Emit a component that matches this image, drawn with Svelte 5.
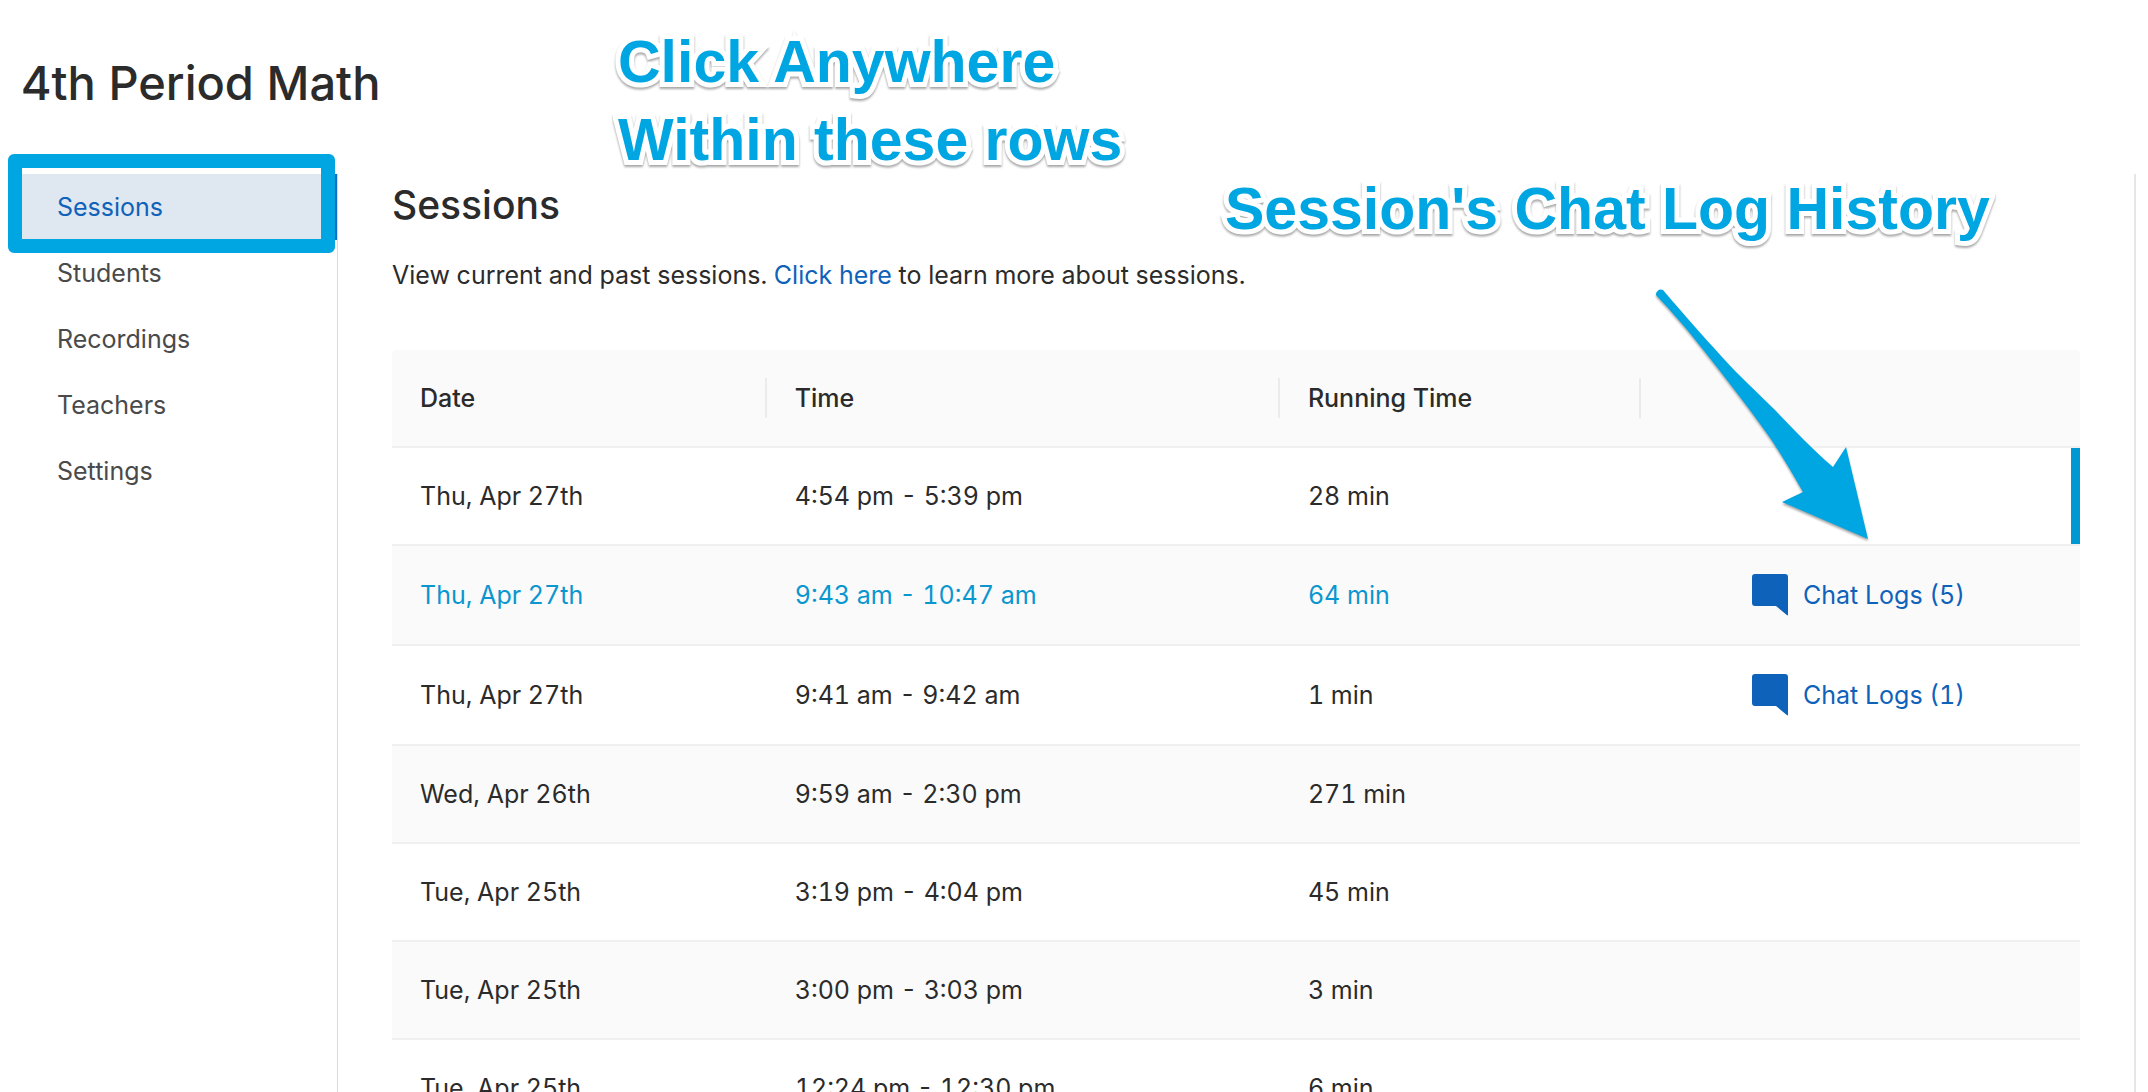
<script>
	let title = '4th Period Math';

	let tabs = ['Sessions', 'Students', 'Recordings', 'Teachers', 'Settings'];
	let active = $state('Sessions');

	let sessions = [
		{ id: 1, date: 'Thu, Apr 27th', time: '4:54 pm - 5:39 pm', running: '28 min', chats: 0, live: true },
		{ id: 2, date: 'Thu, Apr 27th', time: '9:43 am - 10:47 am', running: '64 min', chats: 5 },
		{ id: 3, date: 'Thu, Apr 27th', time: '9:41 am - 9:42 am', running: '1 min', chats: 1 },
		{ id: 4, date: 'Wed, Apr 26th', time: '9:59 am - 2:30 pm', running: '271 min', chats: 0 },
		{ id: 5, date: 'Tue, Apr 25th', time: '3:19 pm - 4:04 pm', running: '45 min', chats: 0 },
		{ id: 6, date: 'Tue, Apr 25th', time: '3:00 pm - 3:03 pm', running: '3 min', chats: 0 },
		{ id: 7, date: 'Tue, Apr 25th', time: '12:24 pm - 12:30 pm', running: '6 min', chats: 0 }
	];

	let selected = $state(2);
</script>

<div class="page">
	<h1>{title}</h1>

	<div class="columns">
		<nav>
			{#each tabs as tab}
				<button class="tab" class:active={tab === active} onclick={() => (active = tab)}>{tab}</button>
			{/each}
			<div class="highlight"></div>
		</nav>

		<main>
			<h2>Sessions</h2>
			<p>View current and past sessions. <a href="#learn">Click here</a> to learn more about sessions.</p>

			<table>
				<colgroup>
					<col class="date" />
					<col class="time" />
					<col class="running" />
					<col />
				</colgroup>
				<thead>
					<tr>
						<th>Date</th>
						<th>Time</th>
						<th>Running Time</th>
						<th></th>
					</tr>
				</thead>
				<tbody>
					{#each sessions as s (s.id)}
						<tr
							class:selected={s.id === selected}
							class:live={s.live}
							class:tall={s.chats > 0}
							onclick={() => (selected = s.id)}
						>
							<td>{s.date}</td>
							<td>{s.time}</td>
							<td>{s.running}</td>
							<td>
								{#if s.chats}
									<a class="chat" href="#chat-{s.id}">
										<svg width="36" height="42" viewBox="0 0 36 42" aria-hidden="true">
											<path d="M3 0H33Q36 0 36 3V40.500Q36 42 34.800 41L24 32H3Q0 32 0 29V3Q0 0 3 0Z" />
										</svg>
										<span>Chat Logs ({s.chats})</span>
									</a>
								{/if}
							</td>
						</tr>
					{/each}
				</tbody>
			</table>
		</main>
	</div>

	<div class="note rows">Click Anywhere<br />Within these rows</div>
	<div class="note history">Session's Chat Log History</div>
	<svg class="arrow" width="230" height="270" viewBox="0 0 230 270" aria-hidden="true">
		<path
			d="M23 10C45 36 62 55 82 77C100 97 117 112 135 130C154 150 172 169 193 187L206 167L228 259L142 222L163 212C152 193 140 172 128 155C106 124 84 96 65 72C47 49 32 32 16 15A5 5 0 0 1 23 10Z"
		/>
	</svg>
</div>

<style>
	:global(body) {
		margin: 0;
		background: #fff;
	}

	.page {
		position: relative;
		height: 100vh;
		overflow: hidden;
		display: flex;
		flex-direction: column;
		box-sizing: border-box;
		padding: 53px 12px 0;
		font-family: Inter, 'Liberation Sans', sans-serif;
		font-size: 25px;
		line-height: 36px;
		font-variant-numeric: tabular-nums;
		color: #2b2b2b;
	}

	h1 {
		margin: 0 9px;
		font-size: 47px;
		line-height: 60px;
		font-weight: 500;
	}

	h2 {
		margin: 0;
		font-size: 39px;
		line-height: 48px;
		font-weight: 500;
	}

	p {
		margin: 28px 0 57px;
	}

	a {
		color: #0f62ba;
		text-decoration: none;
	}

	.columns {
		display: flex;
		flex: 1;
		margin-top: 61px;
	}

	nav {
		position: relative;
		flex: 0 0 326px;
		box-sizing: border-box;
		border-right: 1px solid #d9d9d9;
	}

	.tab {
		display: block;
		width: 100%;
		height: 66px;
		padding: 0 45px;
		border: 0;
		border-right: 4px solid transparent;
		background: none;
		font: inherit;
		color: #4a4a4a;
		text-align: left;
		cursor: pointer;
	}

	.tab.active {
		background: #dfe7f1;
		border-right-color: #0f70c8;
		color: #0f62ba;
	}

	.highlight {
		position: absolute;
		top: -20px;
		left: -4px;
		right: 2px;
		height: 99px;
		box-sizing: border-box;
		border: 14px solid #00a6e2;
		border-radius: 6px;
		pointer-events: none;
	}

	main {
		flex: 1;
		min-width: 0;
		padding: 7px 54px 0;
		border-right: 2px solid #e6e6e6;
	}

	table {
		width: 100%;
		table-layout: fixed;
		border-collapse: separate;
		border-spacing: 0;
	}

	.date {
		width: 22.2%;
	}

	.time {
		width: 30.4%;
	}

	.running {
		width: 21.4%;
	}

	th,
	td {
		position: relative;
		box-sizing: border-box;
		height: 98px;
		padding: 0 28px;
		border-bottom: 2px solid #f0f0f0;
		text-align: left;
	}

	th {
		background: #fafafa;
		font-weight: 500;
	}

	th:first-child {
		border-top-left-radius: 4px;
	}

	th:last-child {
		border-top-right-radius: 4px;
	}

	/* short divider between header cells */
	th:not(:last-child)::after {
		content: '';
		position: absolute;
		top: 28px;
		right: 0;
		width: 2px;
		height: 40px;
		background: #ebebeb;
	}

	tbody tr {
		cursor: pointer;
	}

	tbody tr:nth-child(even) {
		background: #fafafa;
	}

	.tall td {
		height: 100px;
	}

	.selected {
		color: #0a96cf;
	}

	.live td:last-child {
		box-shadow: inset -9px 0 #0098d3;
	}

	td:last-child {
		padding: 0 4px 0 0;
	}

	.chat {
		display: flex;
		align-items: center;
		justify-content: center;
		gap: 15px;
	}

	.chat svg {
		fill: #0f62ba;
	}

	.note {
		position: absolute;
		font-family: 'Liberation Sans', sans-serif;
		font-size: 59px;
		line-height: 78px;
		font-weight: 700;
		color: #00a6e2;
		white-space: nowrap;
		-webkit-text-stroke: 10px #fff;
		paint-order: stroke fill;
		filter: drop-shadow(0 2px 1px rgba(0, 0, 0, 0.35));
		pointer-events: none;
	}

	.rows {
		top: 23px;
		left: 618px;
	}

	.history {
		top: 170px;
		left: 1225px;
	}

	.arrow {
		position: absolute;
		top: 280px;
		left: 1640px;
		fill: #00a6e2;
		filter: drop-shadow(0 2px 1px rgba(0, 0, 0, 0.35));
		pointer-events: none;
	}
</style>
